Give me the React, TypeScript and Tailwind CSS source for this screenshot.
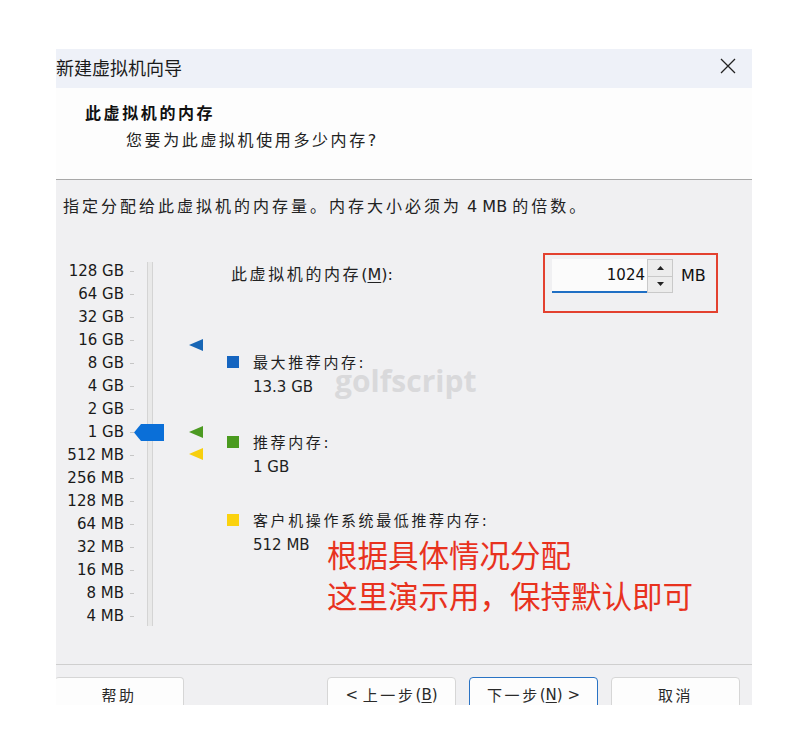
import type { ReactNode } from "react"

const zh = "[font-family:'Noto_Sans_CJK_SC','DejaVu_Sans',sans-serif]"
const num = "[font-family:'DejaVu_Sans','Noto_Sans_CJK_SC',sans-serif]"

// CJK runs are spaced out the way the Song face renders them
function Zh({ children, className = "" }: { children: ReactNode; className?: string }) {
  return <span className={`${zh} tracking-[2.6px] ${className}`}>{children}</span>
}

const scale = [
  "128 GB", "64 GB", "32 GB", "16 GB", "8 GB", "4 GB", "2 GB", "1 GB",
  "512 MB", "256 MB", "128 MB", "64 MB", "32 MB", "16 MB", "8 MB", "4 MB",
]

function Marker({ color, top }: { color: string; top: string }) {
  return (
    <svg className={`absolute left-[133px] ${top}`} width="14" height="12" viewBox="0 0 14 12">
      <polygon points="0,6 14,0 14,12" fill={color} />
    </svg>
  )
}

function Legend({ color, title, value, className = "" }: { color: string; title: string; value: string; className?: string }) {
  return (
    <div className={`flex ${className}`}>
      <div className={`w-[12px] h-[12px] mt-[6px] ${color}`} />
      <div className="ml-[14px] text-[15px] leading-[24px] text-[#1f1f1f]">
        <div>
          <Zh>{title}</Zh>
          <span className={num}>:</span>
        </div>
        <div className={num}>{value}</div>
      </div>
    </div>
  )
}

function Button({ children, primary = false, className = "" }: { children: ReactNode; primary?: boolean; className?: string }) {
  return (
    <div
      className={`shrink-0 h-[36px] w-[129px] rounded-[4px] bg-[#fdfdfd] flex items-center justify-center text-[15px] text-[#2a2a2a] border ${
        primary ? "border-[#2a73c4]" : "border-[#d6d6d6]"
      } ${className}`}
    >
      {children}
    </div>
  )
}

export default function App() {
  return (
    <div className={`w-[808px] h-[755px] bg-white pt-[49px] pl-[56px] ${num}`}>
      <div className="relative w-[696px] h-[656px] overflow-hidden flex flex-col">
        {/* title bar */}
        <div className="shrink-0 h-[39px] bg-[#eef1f8] flex items-center justify-between pr-[16px]">
          <span className={`${zh} text-[18px] text-[#1b1b1b] leading-none -mt-[3px]`}>新建虚拟机向导</span>
          <svg width="16" height="16" viewBox="0 0 16 16" className="-mt-[5px]">
            <path d="M1 1L15 15M15 1L1 15" stroke="#222" strokeWidth="1.3" />
          </svg>
        </div>

        {/* wizard header */}
        <div className="shrink-0 h-[92px] bg-[#fdfdfd] border-b border-[#a8a8a8] pt-[14px] pl-[29px]">
          <div className="text-[16px] leading-[20px] font-bold text-[#111]">
            <Zh>此虚拟机的内存</Zh>
          </div>
          <div className="mt-[5px] ml-[41px] text-[16px] leading-[20px] text-[#222]">
            <Zh>您要为此虚拟机使用多少内存</Zh>
            <span className={num}>?</span>
          </div>
        </div>

        {/* body */}
        <div className="shrink-0 h-[485px] bg-[#f0f0f2] border-b border-[#cfcfcf] pt-[15px] pl-[7px] relative">
          <div className="text-[16px] leading-[20px] text-[#222]">
            <Zh className="tracking-[3px]">指定分配给此虚拟机的内存量。内存大小必须为</Zh>
            <span className={`${num} text-[16px]`}> 4 MB </span>
            <Zh className="tracking-[3px]">的倍数。</Zh>
          </div>

          <div className="mt-[36px] -ml-[7px] flex items-start">
            {/* memory scale */}
            <div className="relative w-[171px] mt-[7px]">
              {scale.map((s) => (
                <div key={s} className="h-[23px] flex items-center">
                  <div className="w-[68px] text-right text-[15px] leading-[23px] text-[#1a1a1a]">{s}</div>
                  <div className="ml-[6px] w-[4px] h-px bg-[#c6c6c6]" />
                </div>
              ))}
              <div className="absolute left-[91px] top-[2px] w-[6px] h-[364px] bg-[#e9e9e9] border-x border-[#d4d4d4]" />
              <svg className="absolute left-[78px] top-[164px]" width="30" height="17" viewBox="0 0 30 17">
                <polygon points="0,8.5 7,0 30,0 30,17 7,17" fill="#0a6fd8" />
              </svg>
              <Marker color="#1766b5" top="top-[79px]" />
              <Marker color="#4c9a22" top="top-[166px]" />
              <Marker color="#f7cf0e" top="top-[188px]" />
            </div>

            {/* memory input + legend */}
            <div className="flex-1 pr-[34px]">
              <div className="flex items-start">
                <div className="ml-[4px] mt-[10px] text-[16px] leading-[20px] text-[#222]">
                  <Zh>此虚拟机的内存</Zh>
                  <span className={num}>
                    (<span className="underline underline-offset-2">M</span>):
                  </span>
                </div>
                <div className="ml-auto w-[175px] h-[60px] border-2 border-[#e3412f] flex items-start pl-[7px] pt-[4px]">
                  <div className="w-[95px] h-[34px] bg-[#fbfbfb] border-b-2 border-[#1f6fc4] flex items-center justify-end pr-[2px] text-[15px] text-[#111]">
                    1024
                  </div>
                  <div className="w-[26px] h-[34px] flex flex-col border border-[#c9c9c9] bg-[#ececec]">
                    <div className="flex-1 flex items-center justify-center border-b border-[#c9c9c9]">
                      <svg width="7" height="4" viewBox="0 0 7 4">
                        <polygon points="3.5,0 7,4 0,4" fill="#222" />
                      </svg>
                    </div>
                    <div className="flex-1 flex items-center justify-center">
                      <svg width="7" height="4" viewBox="0 0 7 4">
                        <polygon points="0,0 7,0 3.5,4" fill="#222" />
                      </svg>
                    </div>
                  </div>
                  <div className="ml-[8px] h-[34px] flex items-center text-[16px] text-[#111]">MB</div>
                </div>
              </div>
              <Legend color="bg-[#1565c0]" title="最大推荐内存" value="13.3 GB" className="mt-[37px]" />
              <Legend color="bg-[#4a9a1f]" title="推荐内存" value="1 GB" className="mt-[31px]" />
              <Legend color="bg-[#fbd20e]" title="客户机操作系统最低推荐内存" value="512 MB" className="mt-[29px]" />
            </div>
          </div>

          {/* watermark */}
          <div className="absolute left-[279px] top-[186px] text-[30px] font-bold text-[#d9d9db] [font-family:'Open_Sans',sans-serif] leading-none">
            golfscript
          </div>

          {/* annotation */}
          <div className={`absolute left-[271px] top-[354px] ${zh} text-[30.5px] leading-[41px] text-[#e8321e]`}>
            <div>根据具体情况分配</div>
            <div>这里演示用，保持默认即可</div>
          </div>
        </div>

        {/* footer buttons */}
        <div className="h-[40px] shrink-0 overflow-hidden bg-[#f0f0f2] pt-[12px] pr-[12px] flex items-start">
          <Button className="-ml-px border-l-0">
            <Zh>帮助</Zh>
          </Button>
          <Button className="ml-auto">
            <span>&lt;&nbsp;</span>
            <Zh>上一步</Zh>
            <span>
              (<span className="underline underline-offset-2">B</span>)
            </span>
          </Button>
          <Button primary className="ml-[13px]">
            <Zh>下一步</Zh>
            <span>
              (<span className="underline underline-offset-2">N</span>) &gt;
            </span>
          </Button>
          <Button className="ml-[13px]">
            <Zh>取消</Zh>
          </Button>
        </div>
      </div>
    </div>
  )
}
